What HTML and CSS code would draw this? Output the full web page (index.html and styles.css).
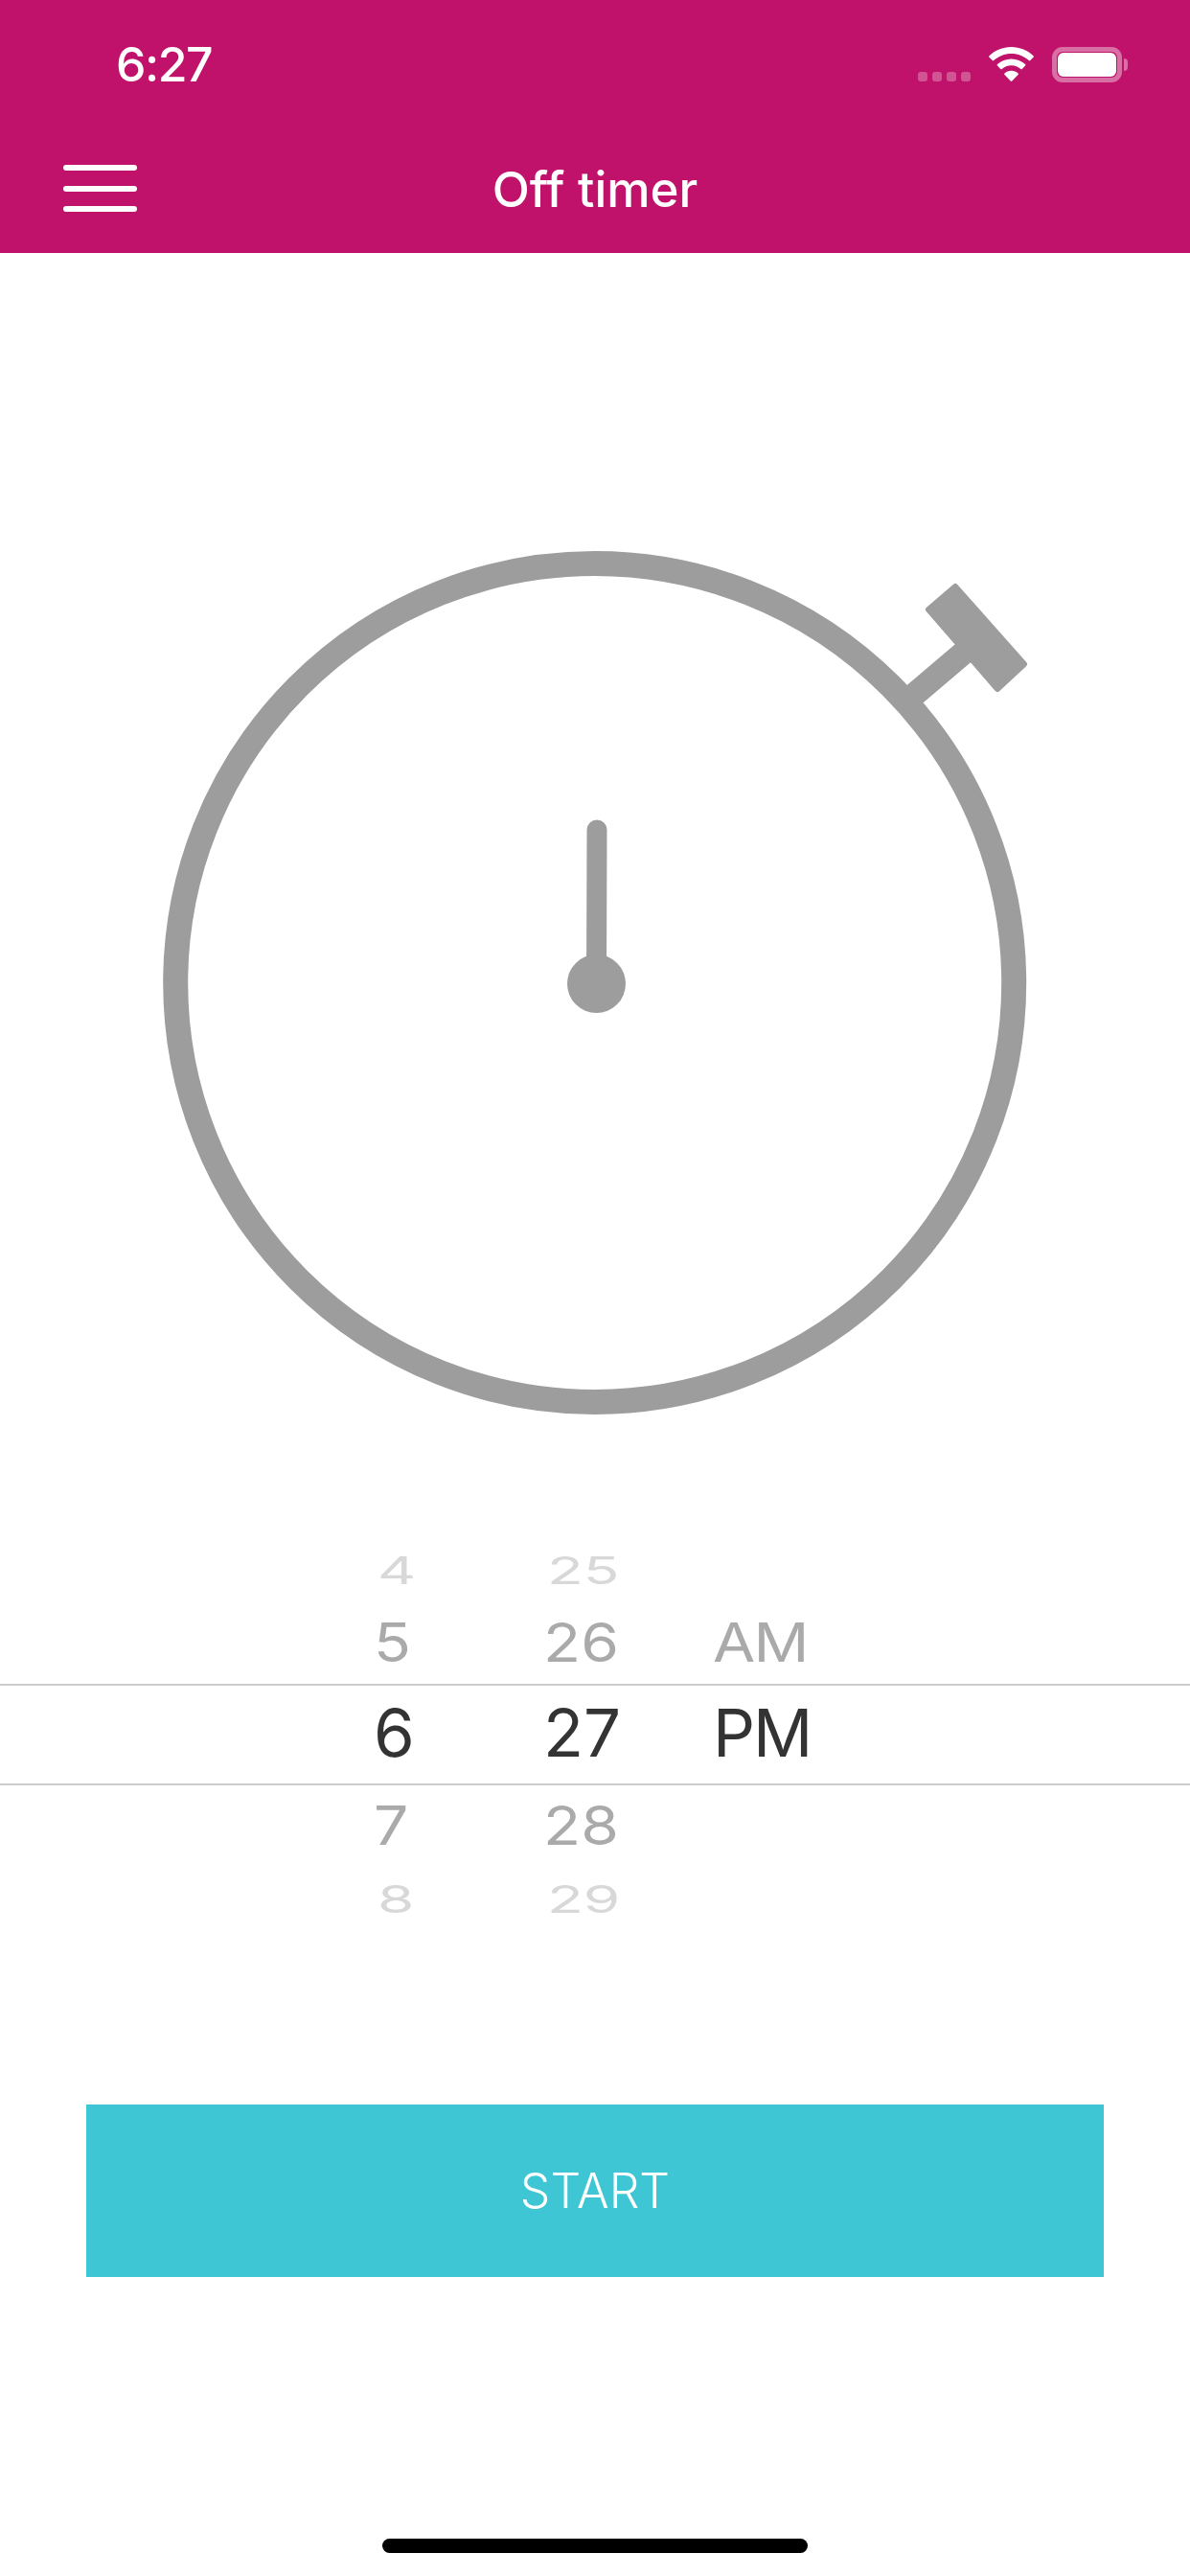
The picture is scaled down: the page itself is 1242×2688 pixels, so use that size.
FILE: index.html
```html
<!DOCTYPE html>
<html lang="en">
<head>
<meta charset="utf-8">
<title>Off timer</title>
<link rel="stylesheet" href="styles.css">
</head>
<body>
<div class="app">
  <header class="header">
    <div class="status">
      <span class="clock">6:27</span>
      <div class="status-icons">
        <div class="signal"><i></i><i></i><i></i><i></i></div>
        <svg class="wifi" width="47" height="36" viewBox="0 0 47 36">
          <path fill="#fff" d="M23.5 0C14.6 0 6.5 3.5.5 9.2c-.5.4-.5 1.1 0 1.6l3.2 3.3c.4.4 1.1.4 1.5 0C10 9.6 16.4 6.9 23.5 6.9s13.5 2.7 18.3 7.2c.4.4 1.1.4 1.5 0l3.2-3.3c.5-.5.5-1.2 0-1.6C40.5 3.5 32.4 0 23.5 0zM23.5 12.4c-5.6 0-10.6 2.1-14.5 5.6-.5.4-.5 1.1 0 1.6l3.2 3.3c.4.4 1 .4 1.5 0 2.6-2.3 6-3.7 9.8-3.7s7.2 1.4 9.8 3.7c.5.4 1.1.4 1.5 0l3.2-3.3c.5-.5.5-1.2 0-1.6-3.9-3.5-8.9-5.6-14.5-5.6zM23.5 24.8c-2.7 0-5.1 1-7 2.6-.5.4-.5 1.1 0 1.6l6.2 6.6c.4.5 1.2.5 1.6 0l6.2-6.6c.5-.5.5-1.2 0-1.6-1.9-1.6-4.3-2.6-7-2.6z"/>
        </svg>
        <div class="battery"><div class="battery-level"></div></div>
        <div class="battery-nub"></div>
      </div>
    </div>
    <nav class="nav">
      <button class="menu" aria-label="Menu"><i></i><i></i><i></i></button>
      <h1 class="title">Off timer</h1>
    </nav>
  </header>

  <svg class="dial" width="930" height="930" viewBox="160 560 930 930">
    <circle cx="620.7" cy="1025.5" r="437.5" fill="none" stroke="#9d9d9d" stroke-width="26"/>
    <line x1="947" y1="731" x2="1020" y2="669" stroke="#9d9d9d" stroke-width="25"/>
    <path fill="#9d9d9d" stroke="#9d9d9d" stroke-width="6" stroke-linejoin="round" d="M997 612 L1069 693 L1041 719 L969 636 Z"/>
    <line x1="623" y1="866" x2="622.5" y2="1026" stroke="#9d9d9d" stroke-width="21" stroke-linecap="round"/>
    <circle cx="622.5" cy="1026.5" r="30.5" fill="#9d9d9d"/>
  </svg>

  <section class="picker">
    <div class="band"></div>
    <div class="column">
      <div class="cell far"><span>4</span></div>
      <div class="cell near"><span>5</span></div>
      <div class="cell current"><span>6</span></div>
      <div class="cell near low"><span>7</span></div>
      <div class="cell far"><span>8</span></div>
    </div>
    <div class="column">
      <div class="cell far"><span>25</span></div>
      <div class="cell near"><span>26</span></div>
      <div class="cell current"><span>27</span></div>
      <div class="cell near low"><span>28</span></div>
      <div class="cell far"><span>29</span></div>
    </div>
    <div class="column period">
      <div class="cell far"></div>
      <div class="cell near"><span>AM</span></div>
      <div class="cell current"><span>PM</span></div>
    </div>
  </section>

  <button class="start">START</button>
  <div class="home-bar"></div>
</div>
</body>
</html>
```

FILE: styles.css
```css
* { box-sizing: border-box; }
html, body { margin: 0; padding: 0; background: #fff; }
body { font-family: Inter, "Liberation Sans", sans-serif; }
.app { width: 1242px; height: 2688px; display: flex; flex-direction: column; overflow: hidden; }

.header { height: 264px; background: #c0126a; color: #fff; flex: none; }
.status { height: 132px; padding: 0 65px 0 121px; display: flex; justify-content: space-between; align-items: flex-start; }
.clock { margin-top: 38px; font-size: 50px; line-height: 58px; font-weight: 500; letter-spacing: -1.5px; }
.status-icons { margin-top: 49px; display: flex; align-items: flex-start; }
.signal { display: flex; gap: 5px; margin-top: 26px; margin-right: 19px; }
.signal i { width: 10px; height: 10px; border-radius: 3px; background: rgba(255,255,255,.28); display: block; }
.wifi { display: block; margin-right: 19px; }
.battery { width: 73px; height: 37px; border: 5px solid rgba(255,255,255,.4); border-radius: 11px; padding: 1px; }
.battery-level { width: 100%; height: 100%; background: #fff; border-radius: 6px; }
.battery-nub { width: 4px; height: 13px; margin: 12px 0 0 2px; background: rgba(255,255,255,.4); border-radius: 0 6px 6px 0; }

.nav { height: 132px; position: relative; display: flex; align-items: flex-start; justify-content: center; }
.menu { position: absolute; left: 66px; top: 40px; width: 77px; height: 49px; padding: 0; border: 0; background: none; display: flex; flex-direction: column; justify-content: space-between; }
.menu i { display: block; width: 77px; height: 6px; border-radius: 3px; background: #fff; }
.title { margin: 37px 0 0; font-size: 51px; line-height: 58px; font-weight: 500; }

.dial { display: block; flex: none; margin: 296px 0 0 160px; }

.picker { position: relative; flex: none; height: 399px; margin-top: 120px; padding-left: 390px; display: grid; grid-template-columns: 177px 177px 1fr; }
.band { position: absolute; left: 0; right: 0; top: 147px; height: 106px; border-top: 2px solid #ccc; border-bottom: 2px solid #ccc; }

.cell { display: flex; align-items: center; }
.cell span { display: block; white-space: nowrap; font-size: 69px; line-height: 69px; transform-origin: 0 50%; }
.current { height: 96px; color: #333; }
.near { height: 94px; color: #aaa; }
.near.low { height: 97px; }
.near span { transform: scale(.93, .82); }
.far { height: 56px; color: #d8d8d8; }
.far span { transform: translateX(4px) scale(.9, .58); }
.period span { letter-spacing: -2px; }

.start { flex: none; align-self: flex-start; width: 1062px; height: 180px; margin: 187px 0 0 90px; padding: 0; border: 0; background: #3ec6d4; color: #fff; font-family: inherit; font-size: 50px; font-weight: 300; }
.home-bar { flex: none; width: 444px; height: 15px; margin: 273px 0 0 399px; border-radius: 8px; background: #000; }
```
